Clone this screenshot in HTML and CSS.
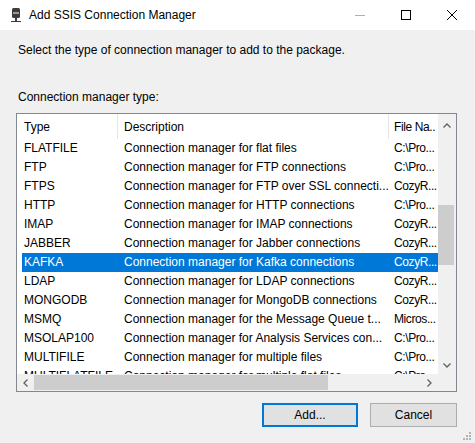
FILE: index.html
```html
<!DOCTYPE html>
<html>
<head>
<meta charset="utf-8">
<link rel="stylesheet" href="styles.css">
</head>
<body>
<div class="window">
  <div class="titlebar">
    <svg class="app-icon" width="16" height="16" viewBox="0 0 16 16">
      <rect x="3" y="0" width="8" height="10" rx="1.5" fill="#3c3c3c"/>
      <rect x="4" y="4" width="6" height="2" fill="#9a9a9a"/>
      <rect x="6" y="10" width="2" height="3" fill="#3c3c3c"/>
      <rect x="2" y="13" width="10" height="1" fill="#3c3c3c"/>
    </svg>
    <span class="title">Add SSIS Connection Manager</span>
    <div class="caption-buttons">
      <div class="cap-btn">
        <svg width="10" height="10" viewBox="0 0 10 10"><rect x="0" y="5" width="10" height="1" fill="#b0b0b0"/></svg>
      </div>
      <div class="cap-btn">
        <svg width="10" height="10" viewBox="0 0 10 10"><rect x="0.5" y="0.5" width="9" height="9" fill="none" stroke="#000" stroke-width="1"/></svg>
      </div>
      <div class="cap-btn">
        <svg width="10" height="10" viewBox="0 0 10 10"><path d="M0 0 L10 10 M10 0 L0 10" stroke="#000" stroke-width="1"/></svg>
      </div>
    </div>
  </div>
  <div class="main">
    <p class="intro">Select the type of connection manager to add to the package.</p>
    <p class="label">Connection manager type:</p>
    <div class="listbox">
      <div class="list-area">
        <div class="header">
          <div class="hcell h-type">Type</div>
          <div class="hcell h-desc">Description</div>
          <div class="hcell h-file">File Na..</div>
        </div>
        <div class="rows">
          <div class="row"><span class="c-type">FLATFILE</span><span class="c-desc">Connection manager for flat files</span><span class="c-file">C:\Pro...</span></div>
          <div class="row"><span class="c-type">FTP</span><span class="c-desc">Connection manager for FTP connections</span><span class="c-file">C:\Pro...</span></div>
          <div class="row"><span class="c-type">FTPS</span><span class="c-desc">Connection manager for FTP over SSL connecti...</span><span class="c-file">CozyR...</span></div>
          <div class="row"><span class="c-type">HTTP</span><span class="c-desc">Connection manager for HTTP connections</span><span class="c-file">C:\Pro...</span></div>
          <div class="row"><span class="c-type">IMAP</span><span class="c-desc">Connection manager for IMAP connections</span><span class="c-file">CozyR...</span></div>
          <div class="row"><span class="c-type">JABBER</span><span class="c-desc">Connection manager for Jabber connections</span><span class="c-file">CozyR...</span></div>
          <div class="row selected"><span class="c-type">KAFKA</span><span class="c-desc">Connection manager for Kafka connections</span><span class="c-file">CozyR...</span></div>
          <div class="row"><span class="c-type">LDAP</span><span class="c-desc">Connection manager for LDAP connections</span><span class="c-file">CozyR...</span></div>
          <div class="row"><span class="c-type">MONGODB</span><span class="c-desc">Connection manager for MongoDB connections</span><span class="c-file">CozyR...</span></div>
          <div class="row"><span class="c-type">MSMQ</span><span class="c-desc">Connection manager for the Message Queue t...</span><span class="c-file">Micros...</span></div>
          <div class="row"><span class="c-type">MSOLAP100</span><span class="c-desc">Connection manager for Analysis Services con...</span><span class="c-file">C:\Pro...</span></div>
          <div class="row"><span class="c-type">MULTIFILE</span><span class="c-desc">Connection manager for multiple files</span><span class="c-file">C:\Pro...</span></div>
          <div class="row"><span class="c-type">MULTIFLATFILE</span><span class="c-desc">Connection manager for multiple flat files</span><span class="c-file">C:\Pro...</span></div>
        </div>
      </div>
      <div class="vscroll">
        <div class="arrow up">
          <svg width="8" height="5" viewBox="0 0 8 5"><path d="M0.5 4.5 L4 1 L7.5 4.5" fill="none" stroke="#606060" stroke-width="1.3"/></svg>
        </div>
        <div class="vtrack"><div class="vthumb"></div></div>
        <div class="arrow down">
          <svg width="8" height="5" viewBox="0 0 8 5"><path d="M0.5 0.5 L4 4 L7.5 0.5" fill="none" stroke="#606060" stroke-width="1.3"/></svg>
        </div>
      </div>
      <div class="hscroll">
        <div class="harrow">
          <svg width="5" height="8" viewBox="0 0 5 8"><path d="M4.5 0.5 L1 4 L4.5 7.5" fill="none" stroke="#606060" stroke-width="1.3"/></svg>
        </div>
        <div class="htrack"><div class="hthumb"></div></div>
        <div class="harrow">
          <svg width="5" height="8" viewBox="0 0 5 8"><path d="M0.5 0.5 L4 4 L0.5 7.5" fill="none" stroke="#606060" stroke-width="1.3"/></svg>
        </div>
      </div>
      <div class="corner"></div>
    </div>
    <div class="buttons">
      <div class="btn default">Add...</div>
      <div class="btn cancel">Cancel</div>
    </div>
  </div>
  <svg class="grip" width="9" height="9" viewBox="0 0 9 9">
    <rect x="6" y="0" width="2" height="2" fill="#b4b4b4"/>
    <rect x="3" y="3" width="2" height="2" fill="#b4b4b4"/>
    <rect x="6" y="3" width="2" height="2" fill="#b4b4b4"/>
    <rect x="0" y="6" width="2" height="2" fill="#b4b4b4"/>
    <rect x="3" y="6" width="2" height="2" fill="#b4b4b4"/>
    <rect x="6" y="6" width="2" height="2" fill="#b4b4b4"/>
  </svg>
</div>
</body>
</html>
```

FILE: styles.css
```css
* { box-sizing: border-box; }
html, body {
  margin: 0;
  padding: 0;
}
body {
  font-family: "Liberation Sans", Arial, sans-serif;
  font-size: 12px;
  color: #000;
  background: #f0f0f0;
}
.window {
  position: relative;
  width: 475px;
  height: 443px;
  background: #f0f0f0;
  overflow: hidden;
}
.titlebar {
  height: 30px;
  background: #fff;
  display: flex;
  align-items: center;
}
.app-icon {
  margin-left: 9px;
  margin-top: 1px;
}
.title {
  margin-left: 4px;
  font-size: 12px;
  line-height: 16px;
}
.caption-buttons {
  margin-left: auto;
  display: flex;
  height: 30px;
}
.cap-btn {
  width: 46px;
  height: 30px;
  display: flex;
  align-items: center;
  justify-content: center;
}
.main {
  padding: 0;
}
.intro {
  margin: 12px 0 0 18px;
  line-height: 16px;
}
.label {
  margin: 31px 0 0 18px;
  line-height: 16px;
}
.listbox {
  margin: 8px 0 0 16px;
  width: 441px;
  height: 279px;
  border: 1px solid #828790;
  background: #fff;
  display: grid;
  grid-template-columns: 421px 18px;
  grid-template-rows: 260px 17px;
}
.list-area {
  overflow: hidden;
  background: #fff;
}
.header {
  display: flex;
  height: 25px;
  line-height: 24px;
}
.hcell {
  white-space: nowrap;
  overflow: hidden;
  padding-top: 1px;
}
.h-type {
  width: 101px;
  padding-left: 7px;
  border-right: 1px solid #e5e5e5;
}
.h-desc {
  width: 271px;
  padding-left: 6px;
  border-right: 1px solid #e5e5e5;
}
.h-file {
  flex: 1;
  padding-left: 5px;
  letter-spacing: -0.4px;
  overflow: visible;
}
.rows {
  padding-left: 5px;
}
.row {
  display: flex;
  width: 416px;
  height: 19px;
  line-height: 19px;
  white-space: nowrap;
}
.row span {
  overflow: hidden;
  display: block;
}
.c-type {
  width: 96px;
  padding-left: 2px;
}
.c-desc {
  width: 271px;
  padding-left: 6px;
}
.row .c-file {
  flex: 1;
  padding-left: 5px;
  letter-spacing: -0.4px;
  overflow: visible;
}
.row.selected {
  background: #0078d7;
  color: #fff;
}
.vscroll {
  background: #f0f0f0;
  display: flex;
  flex-direction: column;
}
.arrow {
  display: flex;
  align-items: center;
  justify-content: center;
  padding-right: 1px;
}
.arrow.up { height: 22px; padding-top: 1px; }
.arrow.down { height: 17px; }
.vtrack {
  flex: 1;
}
.vthumb {
  margin-top: 69px;
  height: 60px;
  margin-right: 2px;
  background: #cdcdcd;
}
.hscroll {
  background: #f0f0f0;
  display: flex;
}
.harrow {
  width: 17px;
  display: flex;
  align-items: center;
  justify-content: center;
}
.htrack {
  flex: 1;
  display: flex;
  align-items: stretch;
}
.hthumb {
  width: 294px;
  margin: 1px 0;
  background: #cdcdcd;
}
.corner {
  background: #f0f0f0;
}
.buttons {
  display: flex;
  justify-content: flex-end;
  gap: 12px;
  margin-top: 11px;
  padding-right: 18px;
}
.btn {
  height: 24px;
  background: #e1e1e1;
  border: 1px solid #adadad;
  display: flex;
  align-items: center;
  justify-content: center;
  line-height: 16px;
}
.btn.default {
  width: 96px;
  border: 2px solid #0078d7;
}
.btn.cancel {
  width: 87px;
}
.grip {
  position: absolute;
  right: 3px;
  bottom: 2px;
}
```
